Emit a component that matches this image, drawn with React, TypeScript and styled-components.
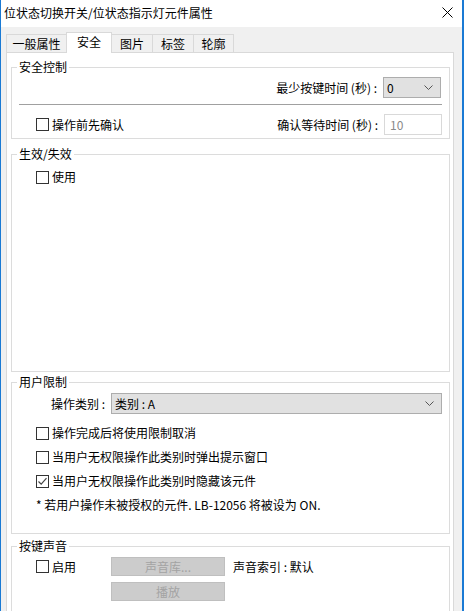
import React from "react";
import styled, { createGlobalStyle } from "styled-components";

const Global = createGlobalStyle`
  html, body { margin: 0; padding: 0; background: #f0f0f0; }
  body { font-family: "Noto Sans CJK SC", "Microsoft YaHei", sans-serif; font-size: 12px; color: #000; }
  * { box-sizing: border-box; }
`;

const Window = styled.div`
  width: 464px;
  height: 611px;
  overflow: hidden;
  display: flex;
  flex-direction: column;
  border-left: 1px solid #1a7ad4;
  border-right: 2px solid #1a7ad4;
  background: #f0f0f0;
`;

const TitleBar = styled.div`
  height: 27px;
  background: #fff;
  display: flex;
  align-items: center;
  justify-content: space-between;
  padding: 0 9px 0 3px;
  line-height: 16px;
  flex-shrink: 0;
`;

const Title = styled.span`
  margin-top: -2px;
`;

const CloseIcon = styled.svg`
  width: 11px;
  height: 11px;
  margin-top: -2px;
`;

const Body = styled.div`
  flex: 1;
  display: flex;
  flex-direction: column;
  padding: 5px 8px 0 5px;
  min-height: 0;
`;

const TabStrip = styled.div`
  display: flex;
  align-items: flex-end;
  height: 21px;
  position: relative;
  z-index: 1;
  margin-bottom: -1px;
`;

const Tab = styled.div<{ $w: number; $active?: boolean }>`
  width: ${(p) => p.$w}px;
  height: ${(p) => (p.$active ? 21 : 19)}px;
  background: ${(p) => (p.$active ? "#fff" : "#f0f0f0")};
  border: 1px solid #d9d9d9;
  border-bottom: ${(p) => (p.$active ? "none" : "1px solid #d9d9d9")};
  margin-left: -1px;
  display: flex;
  justify-content: center;
  align-items: ${(p) => (p.$active ? "flex-start" : "center")};
  padding-top: ${(p) => (p.$active ? 1 : 0)}px;
  line-height: 16px;
  &:first-child { margin-left: 0; }
`;

const Panel = styled.div`
  flex: 1;
  background: #fff;
  border: 1px solid #d9d9d9;
  border-bottom: none;
  padding: 0 3px 0 4px;
  display: flex;
  flex-direction: column;
`;

const Group = styled.div<{ $mt: number; $h: number }>`
  position: relative;
  margin-top: ${(p) => p.$mt}px;
  height: ${(p) => p.$h}px;
  border: 1px solid #dcdcdc;
  display: flex;
  flex-direction: column;
  flex-shrink: 0;
`;

const Legend = styled.span`
  position: absolute;
  top: -9px;
  left: 5px;
  padding: 0 2px;
  background: #fff;
  line-height: 16px;
`;

const Row = styled.div<{ $mt: number; $pl?: number; $pr?: number; $end?: boolean }>`
  display: flex;
  align-items: center;
  margin-top: ${(p) => p.$mt}px;
  padding-left: ${(p) => p.$pl ?? 0}px;
  padding-right: ${(p) => p.$pr ?? 0}px;
  justify-content: ${(p) => (p.$end ? "flex-end" : "flex-start")};
  min-height: 16px;
  line-height: 16px;
`;

const Spacer = styled.div`
  flex: 1;
`;

const Label = styled.span`
  margin-right: 6px;
  white-space: pre;
`;

const Combo = styled.div<{ $w?: number }>`
  ${(p) => (p.$w ? `width: ${p.$w}px;` : "flex: 1;")}
  height: 21px;
  background: #e1e1e1;
  border: 1px solid #adadad;
  display: flex;
  align-items: center;
  padding: 0 7px 0 3px;
  line-height: 16px;
`;

const Chevron = styled.svg`
  width: 9px;
  height: 5px;
  margin-left: auto;
`;

const TextInput = styled.div`
  width: 58px;
  height: 21px;
  border: 1px solid #d9d9d9;
  color: #8a8a8a;
  display: flex;
  align-items: center;
  padding-left: 5px;
  line-height: 16px;
`;

const Separator = styled.div`
  margin: 6px 7px 0 7px;
  height: 1px;
  background: #a0a0a0;
`;

const CheckWrap = styled.label`
  display: flex;
  align-items: center;
  line-height: 16px;
`;

const Box = styled.span`
  width: 13px;
  height: 13px;
  border: 1px solid #333;
  background: #fff;
  margin-right: 3px;
  display: flex;
  align-items: center;
  justify-content: center;
`;

const Note = styled.div`
  margin-top: 8px;
  padding-left: 24px;
  line-height: 16px;
`;

const SoundGrid = styled.div`
  display: grid;
  grid-template-columns: 75px 114px auto;
  grid-auto-rows: 19px;
  row-gap: 6px;
  column-gap: 0;
  align-items: center;
  margin-top: 10px;
  padding-left: 24px;
`;

const Button = styled.div`
  height: 19px;
  background: #cccccc;
  border: 1px solid #bfbfbf;
  color: #a3a3a3;
  display: flex;
  align-items: center;
  justify-content: center;
  line-height: 16px;
`;

const SoundText = styled.span`
  padding-left: 8px;
  line-height: 16px;
`;

const Check = ({ label, checked }: { label: string; checked?: boolean }) => (
  <CheckWrap>
    <Box>
      {checked && (
        <svg width="11" height="11" viewBox="0 0 11 11">
          <path d="M1.5 5.5 L4.2 8.2 L9.5 2.2" fill="none" stroke="#444" strokeWidth="1.2" />
        </svg>
      )}
    </Box>
    {label}
  </CheckWrap>
);

const Down = () => (
  <Chevron viewBox="0 0 9 5">
    <path d="M0.5 0.5 L4.5 4.5 L8.5 0.5" fill="none" stroke="#555" strokeWidth="1" />
  </Chevron>
);

const tabs: { label: string; w: number; active?: boolean }[] = [
  { label: "一般属性", w: 61 },
  { label: "安全", w: 46, active: true },
  { label: "图片", w: 42 },
  { label: "标签", w: 42 },
  { label: "轮廓", w: 41 },
];

export default function App() {
  return (
    <>
      <Global />
      <Window>
        <TitleBar>
          <Title>位状态切换开关/位状态指示灯元件属性</Title>
          <CloseIcon viewBox="0 0 11 11">
            <path d="M0.5 0.5 L10.5 10.5 M10.5 0.5 L0.5 10.5" stroke="#000" strokeWidth="1" />
          </CloseIcon>
        </TitleBar>
        <Body>
          <TabStrip>
            {tabs.map((t) => (
              <Tab key={t.label} $w={t.w} $active={t.active}>
                {t.label}
              </Tab>
            ))}
          </TabStrip>
          <Panel>
            <Group $mt={14} $h={72}>
              <Legend>安全控制</Legend>
              <Row $mt={9} $pr={8} $end>
                <Label>最少按键时间 (秒) :</Label>
                <Combo $w={58}>
                  0
                  <Down />
                </Combo>
              </Row>
              <Separator />
              <Row $mt={9} $pl={24} $pr={7}>
                <Check label="操作前先确认" />
                <Spacer />
                <Label>确认等待时间 (秒) :</Label>
                <TextInput>10</TextInput>
              </Row>
            </Group>

            <Group $mt={15} $h={218}>
              <Legend>生效/失效</Legend>
              <Row $mt={14} $pl={24}>
                <Check label="使用" />
              </Row>
            </Group>

            <Group $mt={10} $h={152}>
              <Legend>用户限制</Legend>
              <Row $mt={10} $pl={39} $pr={7}>
                <Label>操作类别 :</Label>
                <Combo>
                  类别 : A
                  <Down />
                </Combo>
              </Row>
              <Row $mt={11} $pl={24}>
                <Check label="操作完成后将使用限制取消" />
              </Row>
              <Row $mt={8} $pl={24}>
                <Check label="当用户无权限操作此类别时弹出提示窗口" />
              </Row>
              <Row $mt={8} $pl={24}>
                <Check label="当用户无权限操作此类别时隐藏该元件" checked />
              </Row>
              <Note>* 若用户操作未被授权的元件. LB-12056 将被设为 ON.</Note>
            </Group>

            <Group $mt={12} $h={90}>
              <Legend>按键声音</Legend>
              <SoundGrid>
                <Check label="启用" />
                <Button>声音库...</Button>
                <SoundText>声音索引 : 默认</SoundText>
                <span />
                <Button>播放</Button>
              </SoundGrid>
            </Group>
          </Panel>
        </Body>
      </Window>
    </>
  );
}
